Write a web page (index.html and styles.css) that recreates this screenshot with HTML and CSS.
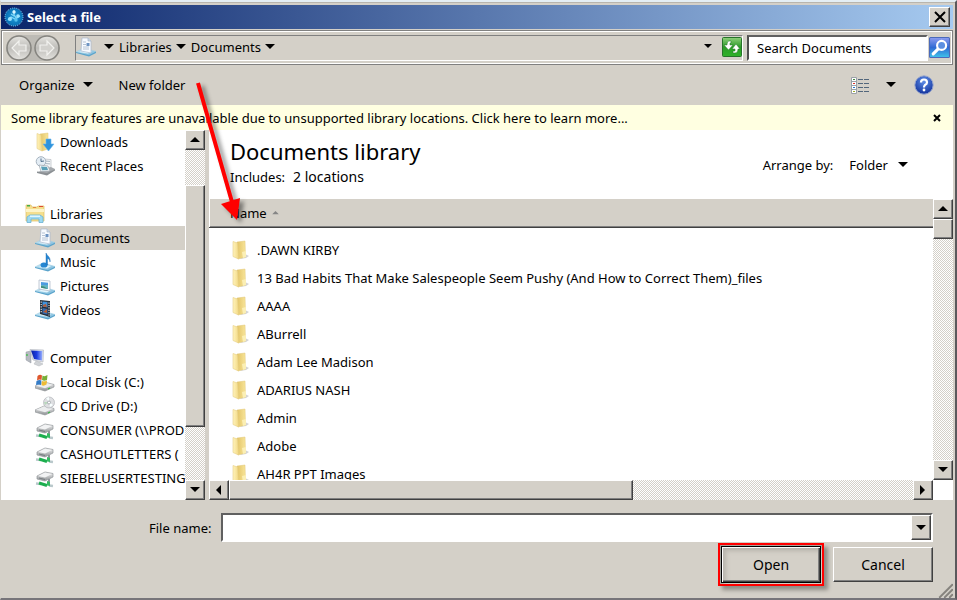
FILE: index.html
```html
<!DOCTYPE html>
<html lang="en">
<head>
<meta charset="utf-8">
<meta name="viewport" content="width=device-width, initial-scale=1">
<title>Select a file</title>
<link rel="stylesheet" href="styles.css">
</head>
<body>
<svg class="defs" aria-hidden="true">
  <defs>
    <linearGradient id="gold" x1="0" x2="1"><stop offset="0" stop-color="#e3c466"/><stop offset="1" stop-color="#f8e59a"/></linearGradient>
    <linearGradient id="goldFront" x1="0" x2="1"><stop offset="0" stop-color="#fff3bd"/><stop offset="1" stop-color="#f3da85"/></linearGradient>
    <linearGradient id="tray" x1="0" y1="0" x2="1" y2="1"><stop offset="0" stop-color="#d6f0fa"/><stop offset="1" stop-color="#6fb3d8"/></linearGradient>
    <linearGradient id="metal" x1="0" y1="0" x2="0" y2="1"><stop offset="0" stop-color="#f4f4f4"/><stop offset="1" stop-color="#8d9194"/></linearGradient>
    <linearGradient id="green" x1="0" y1="0" x2="0" y2="1"><stop offset="0" stop-color="#8fd07c"/><stop offset=".5" stop-color="#2c9b28"/><stop offset="1" stop-color="#2fb32a"/></linearGradient>
    <linearGradient id="searchBlue" x1="0" y1="0" x2="0" y2="1"><stop offset="0" stop-color="#8e9cf0"/><stop offset=".5" stop-color="#2f6ad4"/><stop offset="1" stop-color="#3fc4ea"/></linearGradient>
    <linearGradient id="navFace" x1="0" y1="0" x2="0" y2="1"><stop offset="0" stop-color="#e6e5e1"/><stop offset=".5" stop-color="#bdbcb8"/><stop offset="1" stop-color="#e4e3df"/></linearGradient>
    <radialGradient id="helpBlue" cx=".5" cy=".3" r=".7"><stop offset="0" stop-color="#5f8fe8"/><stop offset="1" stop-color="#12329c"/></radialGradient>
    <radialGradient id="appBlue" cx=".5" cy=".5" r=".6"><stop offset="0" stop-color="#1f9ad8"/><stop offset="1" stop-color="#0468ae"/></radialGradient>
    <linearGradient id="screen" x1="0" y1="0" x2="1" y2="0"><stop offset="0" stop-color="#0a1fa0"/><stop offset=".5" stop-color="#1c3be0"/><stop offset="1" stop-color="#9db4ff"/></linearGradient>
  </defs>
  <symbol id="folder" viewBox="0 0 20 20">
    <path d="M9 19l5-5 4 2-3 2z" fill="#b5b5b5" opacity=".6"/>
    <path d="M6 2l8-1 .5 16L7 19z" fill="url(#gold)" stroke="#e0c677" stroke-width=".5"/>
    <path d="M11 12l4-1v6l-3 1z" fill="#fbefb5"/>
    <path d="M2 1.500L6.500 3 7.500 19 2 16.500z" fill="url(#goldFront)" stroke="#e6cf85" stroke-width=".6"/>
  </symbol>
  <symbol id="downloads" viewBox="0 0 20 20">
    <path d="M5 2l8-1v16l-6 2z" fill="url(#gold)" stroke="#e0c677" stroke-width=".5"/>
    <path d="M2 1.500L6 3l1 16-5-2.500z" fill="url(#goldFront)" stroke="#e6cf85" stroke-width=".6"/>
    <path d="M11 7h5v5h3l-5.500 7L8 12h3z" fill="#2f93dc" stroke="#69b7ec" stroke-width=".6"/>
  </symbol>
  <symbol id="tray-base" viewBox="0 0 20 20">
    <path d="M0 15l8-4 12 3.500-7 4z" fill="url(#tray)" stroke="#a3cfe3" stroke-width=".6"/>
    <path d="M0 15l13 3 7-3.500V16l-7 3.500L0 16z" fill="#5ba4cc"/>
    <path d="M4 15l4.500-2.500L16 14l-4 2.500z" fill="#e4f6fd"/>
  </symbol>
  <symbol id="documents" viewBox="0 0 20 20">
    <use href="#tray-base"/>
    <path d="M6 1h6l3 3v12l-10-2z" fill="#f7faff" stroke="#a9b7cb" stroke-width=".7"/>
    <path d="M12 1v3h3" fill="#cfdcec" stroke="#9eabbe" stroke-width=".6"/>
    <path d="M7 5h3M7 7.500h3M7 10h6M7 12h6" stroke="#a5b4c8" stroke-width=".8"/>
    <path d="M10.500 6h3v3h-3z" fill="#6c93c2"/>
  </symbol>
  <symbol id="music" viewBox="0 0 20 20">
    <use href="#tray-base"/>
    <ellipse cx="9" cy="13" rx="3.500" ry="2.600" fill="#2687d2"/>
    <path d="M11 13V1c1 3 5 4 4 9 0-2-1-3-2.500-3.500V13z" fill="#2485d4" stroke="#1869ad" stroke-width=".4"/>
  </symbol>
  <symbol id="pictures" viewBox="0 0 20 20">
    <use href="#tray-base"/>
    <path d="M4 4l11 1v10L4 13z" fill="#f8fbfe" stroke="#a9b6c4" stroke-width=".7"/>
    <path d="M6 6l7 .7V9L6 9z" fill="#4c9be0"/>
    <path d="M6 9h7v4l-7-1.200z" fill="#62b3c4"/><path d="M6 10l3 .5 4 2.500-7-1.200z" fill="#3e8c78"/>
  </symbol>
  <symbol id="videos" viewBox="0 0 20 20">
    <use href="#tray-base"/>
    <path d="M5 0l10 1v16L5 14z" fill="#26303c"/>
    <path d="M7.500 1.500l5 .5v5.500l-5-1z" fill="#4192dc"/>
    <path d="M7.500 8l5 1v5.500l-5-1z" fill="#346bb1"/>
    <path d="M8 5l3-1 1 3-4-.6zM8 12l4-3v4z" fill="#b85b31"/>
    <path d="M6.200 1.500v12M14 2.500v13" stroke="#dfe6ec" stroke-width="1.100" stroke-dasharray="1.200 1.200"/>
  </symbol>
  <symbol id="recent" viewBox="0 0 20 20">
    <path d="M8 3l8 .5v8L8 11z" fill="#f5f7f9" stroke="#b7bcc2" stroke-width=".7"/>
    <path d="M10 5l5 .4M10 7.500l5 .4" stroke="#a9b6c2"/>
    <circle cx="6" cy="5.500" r="4.800" fill="#e4edf5" stroke="#a7b4c0"/>
    <path d="M6 2.500v3l3-.5" fill="none" stroke="#53718d"/>
    <path d="M3 16l13-5 4 2-8 6z" fill="#a5a9ad"/>
    <path d="M4 9l9 1 2 5-9 .5z" fill="#f4f7f9" stroke="#9ca5ad" stroke-width=".7"/>
    <path d="M6 10.500l6 .5 1 3-6 .2z" fill="#5aa0b8"/>
    <path d="M2 15.500l10 1.500 8-4v1.500L12 19.500 2 17z" fill="#8b9094"/>
  </symbol>
  <symbol id="libraries" viewBox="0 0 20 20">
    <path d="M1 3V1h5l1 2h5l1-1h6v15H1z" fill="#f5df8e" stroke="#dcbd62" stroke-width=".7"/>
    <path d="M1 5h18v3H1z" fill="#fdf4c7"/>
    <path d="M2 1h3v1.500H2z" fill="#43ad49"/><path d="M8 3h3v1H8z" fill="#e38b41"/><path d="M14 2h4v1h-4z" fill="#df4a33"/>
    <path d="M2 18.500V13l3-2h10l3 2v5.500h-4V15H6v3.500z" fill="#9ddaf2" stroke="#6bb2d4" stroke-width=".8"/>
    <path d="M5 11.500h10V13H5z" fill="#dff6ff"/>
  </symbol>
  <symbol id="computer" viewBox="0 0 20 20">
    <path d="M1 4l5-1v12l-5-3z" fill="#b5bac0" stroke="#9297a0" stroke-width=".5"/>
    <path d="M5 1.500L18.500 2 18 14 8 12z" fill="#e3e5e9" stroke="#b4b9c2" stroke-width=".7"/>
    <path d="M6 2.500l11.500.5-.5 9.500-8-1.500z" fill="url(#screen)"/>
    <path d="M11 13l3 1 4 2-4 2-5-2z" fill="#d0d3d7" stroke="#b0b4b8" stroke-width=".5"/>
    <path d="M2 6v2" stroke="#35bd3b" stroke-width="1.200"/>
  </symbol>
  <symbol id="drive" viewBox="0 0 20 20">
    <path d="M0 14l9-4 10 2.500V15l-9 4-10-3z" fill="url(#metal)" stroke="#94989b" stroke-width=".7"/>
    <path d="M1 13.800l8-3.300 9 2.200-8 3.500z" fill="#eceeef"/>
    <path d="M13 17l2-1" stroke="#36bb42" stroke-width="1.200"/>
  </symbol>
  <symbol id="local-disk" viewBox="0 0 20 20">
    <use href="#drive"/>
    <path d="M2.500 4q2.500-2 4.500-.5L6.500 8q-2-1-4.500.5z" fill="#df572d"/><path d="M7.500 3.500q2 1.500 5-.5l-.5 5q-3 1.500-5 0z" fill="#77af38"/>
    <path d="M1.500 9q3-1.500 5-.5L6 13q-2-1-5 0z" fill="#347cc7"/><path d="M7 9q2 1 5-.5l-.5 4q-3 2-5 .5z" fill="#eebc35"/>
  </symbol>
  <symbol id="cd-drive" viewBox="0 0 20 20">
    <use href="#drive"/>
    <circle cx="14" cy="6.500" r="5.500" fill="#dedfe2" stroke="#b1b5b9" stroke-width=".7"/>
    <path d="M14 6l-3-4 3-1zM14 6l4 3-3 2z" fill="#f8ffff"/>
    <path d="M14 6l-4 3-1-3z" fill="#b9d7bd"/>
    <circle cx="14" cy="6.500" r="1.500" fill="#fff" stroke="#8d9499" stroke-width=".7"/>
  </symbol>
  <symbol id="network-drive" viewBox="0 0 20 20">
    <path d="M2 8l8-4 8 1.500V9l-8 4-8-2z" fill="url(#metal)" stroke="#94989b" stroke-width=".7"/>
    <path d="M3 8l7-3.200L17 6l-7 3.500z" fill="#f2f3f4"/>
    <path d="M4 10l6 1.500" stroke="#777d81"/>
    <path d="M14 11v4" stroke="#8d9498" stroke-width="2"/>
    <path d="M1 15.500l5 .5m8 1.500l4 .5" stroke="#b9c8cb" stroke-width="2.500"/>
    <path d="M4 15l8 2.500" stroke="#1cae4e" stroke-width="3"/>
    <path d="M12 13l3 1v4l-3-.5z" fill="#35bb62"/>
  </symbol>
  <symbol id="down" viewBox="0 0 10 6"><path d="M0 0h10L5 5z"/></symbol>
  <symbol id="up" viewBox="0 0 10 6"><path d="M0 5h10L5 0z"/></symbol>
  <symbol id="left" viewBox="0 0 6 10"><path d="M5 0v10L0 5z"/></symbol>
  <symbol id="right" viewBox="0 0 6 10"><path d="M0 0v10l5-5z"/></symbol>
</svg>

<main class="dialog">
  <header class="titlebar">
    <svg class="app-icon" viewBox="0 0 20 20" aria-hidden="true">
      <circle cx="10" cy="10" r="9" fill="url(#appBlue)" stroke="#8bd8ff" stroke-dasharray="1 1"/>
      <path d="M4 13l3-3 4 2 5-3M10 3v5l3 4M7 7l3 2" fill="none" stroke="#7ed5f6" stroke-width="1.300"/>
      <circle cx="10" cy="5" r="1.700" fill="#d9f6ff"/><circle cx="6" cy="12" r="2" fill="#9be3ff"/><circle cx="14" cy="9" r="1.800" fill="#9be3ff"/><circle cx="12" cy="13" r="1.700" fill="#54c2ef"/>
    </svg>
    <h1 class="title">Select a file</h1>
    <button class="face close" type="button" aria-label="Close"><svg viewBox="0 0 12 12"><path d="M1 1l10 10M11 1L1 11" stroke="#000" stroke-width="2"/></svg></button>
  </header>

  <nav class="navbar" aria-label="Address">
    <div class="history">
      <button class="plain round" type="button" aria-label="Back"><svg viewBox="0 0 26 26"><circle cx="13" cy="13" r="12" fill="url(#navFace)" stroke="#85847f" stroke-width="1.500"/><path d="M13 6l-7 7 7 7v-4h7v-6h-7z" fill="#d2d1cd" stroke="#f2f2ef" stroke-width="1.200"/></svg></button>
      <button class="plain round" type="button" aria-label="Forward"><svg viewBox="0 0 26 26"><circle cx="13" cy="13" r="12" fill="url(#navFace)" stroke="#85847f" stroke-width="1.500"/><path d="M13 6l7 7-7 7v-4H6v-6h7z" fill="#d2d1cd" stroke="#f2f2ef" stroke-width="1.200"/></svg></button>
    </div>
    <div class="address">
      <svg class="icon" aria-hidden="true"><use href="#documents"/></svg>
      <button class="plain crumb" type="button" aria-label="Locations"><svg class="caret"><use href="#down"/></svg></button>
      <button class="plain crumb" type="button">Libraries <svg class="caret"><use href="#down"/></svg></button>
      <button class="plain crumb" type="button">Documents <svg class="caret"><use href="#down"/></svg></button>
      <button class="plain crumb previous" type="button" aria-label="Previous locations"><svg class="caret small" viewBox="0 0 10 6"><use href="#down"/></svg></button>
      <button class="plain refresh" type="button" aria-label="Refresh"><svg class="icon" viewBox="0 0 20 20"><rect x=".5" y=".5" width="19" height="19" rx="1" fill="url(#green)" stroke="#27732a"/><path d="M9 4H7q-2 0-2 4H2l4.500 5L11 8H8V6h1zM11 16h2q3 0 3-4h2l-4-5-4 5h3v2h-2z" fill="#fff" stroke="#227a25" stroke-width=".5"/></svg></button>
    </div>
    <div class="search">
      <input class="search-input" type="text" value="Search Documents" aria-label="Search Documents">
      <button class="plain" type="button" aria-label="Search"><svg class="search-icon" viewBox="0 0 20 20"><rect x=".5" y=".5" width="19" height="19" rx="1" fill="url(#searchBlue)" stroke="#4b6aba"/><path d="M9 11l-5 5" stroke="#fff" stroke-width="3" stroke-linecap="round"/><circle cx="12" cy="8" r="4.300" fill="#5c8fe0" stroke="#fff" stroke-width="2"/></svg></button>
    </div>
  </nav>

  <div class="toolbar">
    <button class="plain organize" type="button">Organize <svg class="caret"><use href="#down"/></svg></button>
    <button class="plain" type="button">New folder</button>
    <button class="plain view" type="button" aria-label="Change your view"><svg class="icon" viewBox="0 0 20 20"><path d="M1.500 2.500h5v16h-5z" fill="#fff" stroke="#9aa1a8"/><path d="M1 6.500h6M1 10.500h6M1 14.500h6" stroke="#9aa1a8"/><path d="M3 4.500h2" stroke="#408843"/><path d="M3 8.500h2" stroke="#e03428"/><path d="M3 12.500h2" stroke="#2871ca"/><path d="M3 16.500h2" stroke="#9fad28"/><path d="M8 4.500h5m1 0h5M8 8.500h5m1 0h5M8 12.500h5m1 0h5M8 16.500h5m1 0h5" stroke="#53677c"/></svg></button>
    <button class="plain" type="button" aria-label="More views"><svg class="caret"><use href="#down"/></svg></button>
    <button class="plain help" type="button" aria-label="Help"><svg class="icon" viewBox="0 0 20 20"><circle cx="10" cy="10" r="9.200" fill="url(#helpBlue)" stroke="#9ba9ce"/><path d="M7 7.500q0-3 3-3t3 3q0 1.500-2 2.500-1 1-1 2.500" fill="none" stroke="#fff" stroke-width="2.200"/><circle cx="10" cy="15" r="1.400" fill="#fff"/></svg></button>
  </div>

  <div class="notice">
    <a class="notice-text" href="#learn-more">Some library features are unavailable due to unsupported library locations. Click here to learn more...</a>
    <button class="plain" type="button" aria-label="Dismiss"><svg class="dismiss" viewBox="0 0 8 8"><path d="M1 1l6 6M7 1L1 7" stroke="#000" stroke-width="2"/></svg></button>
  </div>

  <div class="browser">
    <aside class="sidebar">
      <div class="tree">
        <ul class="group">
          <li class="place"><svg class="icon"><use href="#downloads"/></svg>Downloads</li>
          <li class="place"><svg class="icon"><use href="#recent"/></svg>Recent Places</li>
        </ul>
        <ul class="group">
          <li class="place root"><svg class="icon"><use href="#libraries"/></svg>Libraries</li>
          <li class="place selected"><svg class="icon"><use href="#documents"/></svg>Documents</li>
          <li class="place"><svg class="icon"><use href="#music"/></svg>Music</li>
          <li class="place"><svg class="icon"><use href="#pictures"/></svg>Pictures</li>
          <li class="place"><svg class="icon"><use href="#videos"/></svg>Videos</li>
        </ul>
        <ul class="group">
          <li class="place root"><svg class="icon"><use href="#computer"/></svg>Computer</li>
          <li class="place"><svg class="icon"><use href="#local-disk"/></svg>Local Disk (C:)</li>
          <li class="place"><svg class="icon"><use href="#cd-drive"/></svg>CD Drive (D:)</li>
          <li class="place"><svg class="icon"><use href="#network-drive"/></svg>CONSUMER (\\PROD</li>
          <li class="place"><svg class="icon"><use href="#network-drive"/></svg>CASHOUTLETTERS (</li>
          <li class="place"><svg class="icon"><use href="#network-drive"/></svg>SIEBELUSERTESTING</li>
        </ul>
      </div>
      <div class="scroll vertical">
        <button class="face step" type="button" aria-label="Scroll up"><svg class="caret"><use href="#up"/></svg></button>
        <div class="track tree-track"><div class="face thumb"></div></div>
        <button class="face step" type="button" aria-label="Scroll down"><svg class="caret"><use href="#down"/></svg></button>
      </div>
    </aside>

    <section class="content">
      <div class="library-head">
        <div>
          <h2 class="library-title">Documents library</h2>
          <p class="includes">Includes: <a class="locations" href="#locations">2 locations</a></p>
        </div>
        <div class="arrange"><span id="arrange-label">Arrange by:</span>
          <button class="plain" type="button" aria-labelledby="arrange-label arrange-value"><span id="arrange-value">Folder</span> <svg class="caret"><use href="#down"/></svg></button>
        </div>
      </div>
      <div class="listing">
        <div class="files">
          <table class="file-table">
            <thead><tr><th scope="col">Name <svg class="sort" viewBox="0 0 10 6"><use href="#up"/></svg></th></tr></thead>
            <tbody>
              <tr><td><svg class="icon"><use href="#folder"/></svg>.DAWN KIRBY</td></tr>
              <tr><td><svg class="icon"><use href="#folder"/></svg>13 Bad Habits That Make Salespeople Seem Pushy (And How to Correct Them)_files</td></tr>
              <tr><td><svg class="icon"><use href="#folder"/></svg>AAAA</td></tr>
              <tr><td><svg class="icon"><use href="#folder"/></svg>ABurrell</td></tr>
              <tr><td><svg class="icon"><use href="#folder"/></svg>Adam Lee Madison</td></tr>
              <tr><td><svg class="icon"><use href="#folder"/></svg>ADARIUS NASH</td></tr>
              <tr><td><svg class="icon"><use href="#folder"/></svg>Admin</td></tr>
              <tr><td><svg class="icon"><use href="#folder"/></svg>Adobe</td></tr>
              <tr><td><svg class="icon"><use href="#folder"/></svg>AH4R PPT Images</td></tr>
            </tbody>
          </table>
        </div>
        <div class="scroll vertical">
          <button class="face step" type="button" aria-label="Scroll up"><svg class="caret"><use href="#up"/></svg></button>
          <div class="track"><div class="face thumb short"></div></div>
          <button class="face step" type="button" aria-label="Scroll down"><svg class="caret"><use href="#down"/></svg></button>
        </div>
        <div class="scroll horizontal">
          <button class="face step" type="button" aria-label="Scroll left"><svg class="side"><use href="#left"/></svg></button>
          <div class="track"><div class="face thumb wide"></div></div>
          <button class="face step" type="button" aria-label="Scroll right"><svg class="side"><use href="#right"/></svg></button>
        </div>
      </div>
    </section>
  </div>

  <form class="footer">
    <div class="name-row">
      <label for="file-name">File name:</label>
      <div class="combo">
        <input id="file-name" class="name-input" type="text">
        <button class="face step" type="button" aria-label="Recent file names"><svg class="caret"><use href="#down"/></svg></button>
      </div>
    </div>
    <div class="actions">
      <div class="highlight"><button class="face action default" type="button">Open</button></div>
      <button class="face action" type="button">Cancel</button>
    </div>
    <svg class="grip" viewBox="0 0 16 16" aria-hidden="true"><path d="M1 16L16 1M6 16L16 6M11 16l5-5" stroke="#fff"/><path d="M2 16L16 2M7 16l9-9M12 16l4-4" stroke="#85827c" stroke-width="2"/></svg>
  </form>

  <svg class="pointer" viewBox="0 0 60 150" aria-hidden="true">
    <path d="M8 3L42 122" stroke="#f00" stroke-width="4"/>
    <path d="M31 124l19-6-3 22z" fill="#f00"/>
  </svg>
</main>
</body>
</html>
```

FILE: styles.css
```css
:root {
  --face: #d4d0c8;
  --shadow: #808080;
  --dark: #404040;
}

* { box-sizing: border-box; }

body {
  margin: 0;
  background: var(--face);
  color: #000;
  font: 13px/20px "Noto Sans", sans-serif;
}

button, input { font: inherit; color: inherit; }
h1, h2, p, ul { margin: 0; padding: 0; font-weight: normal; }
ul { list-style: none; }
a { color: inherit; text-decoration: none; }
svg { display: block; flex: none; }

.defs { position: absolute; width: 0; height: 0; }
.icon { width: 20px; height: 20px; }
.caret { width: 10px; height: 6px; }
.caret.small { width: 8px; height: 5px; }
.side { width: 6px; height: 10px; }

.plain {
  display: flex;
  align-items: center;
  padding: 0;
  border: 0;
  background: none;
}

.face {
  background: var(--face);
  border: 1px solid;
  border-color: #fff var(--dark) var(--dark) #fff;
  box-shadow: inset -1px -1px var(--shadow);
}

.dialog {
  position: relative;
  display: flex;
  flex-direction: column;
  height: 100vh;
  min-height: 480px;
  padding: 3px 2px 0 0;
  border-top: 2px solid #e4eef4;
  border-left: 1px solid var(--face);
  border-right: 2px solid #5a595c;
  border-bottom: 2px solid #77757a;
  box-shadow: inset 0 1px #b8b5ae;
}

.titlebar {
  display: flex;
  align-items: center;
  gap: 3px;
  height: 24px;
  padding: 0 3px;
  background: linear-gradient(90deg, #0a246a, #a6caf0);
}
.app-icon { width: 20px; height: 20px; }
.title {
  flex: 1;
  color: #fff;
  font: bold 13px/20px "Noto Sans", sans-serif;
}
.close {
  display: grid;
  place-items: center;
  width: 21px;
  height: 20px;
  padding: 0;
}
.close svg { width: 12px; height: 12px; }

.navbar {
  display: flex;
  align-items: center;
  height: 35px;
  margin-top: 1px;
  padding: 0 2px 0 4px;
  border: 1px solid var(--shadow);
  box-shadow: inset 1px 1px #fff, inset -1px -1px #fff;
}
.history {
  display: flex;
  gap: 2px;
  background: #bdbbb5;
  border-radius: 13px;
}
.round svg { width: 26px; height: 26px; }
.address {
  display: flex;
  flex: 1;
  align-items: center;
  height: 26px;
  margin: 0 4px 0 15px;
  padding-bottom: 2px;
  border: 1px solid;
  border-color: var(--shadow) #fff #fff var(--shadow);
}
.crumb { gap: 4px; margin-left: 5px; }
.address .icon + .crumb { margin-left: 8px; }
.previous { margin-left: auto; }
.refresh { margin-left: 10px; }
.search {
  display: flex;
  align-items: center;
  gap: 1px;
  width: 203px;
}
.search-input {
  flex: 1;
  min-width: 0;
  height: 26px;
  padding: 0 8px;
  border: 2px solid;
  border-color: #606060 #fff #fff #505050;
  background: #fff;
}
.search-icon { width: 21px; height: 21px; }

.toolbar {
  display: flex;
  align-items: center;
  height: 40px;
  padding: 0 19px 0 18px;
}
.organize { gap: 8px; margin-right: 26px; }
.view { margin-left: auto; margin-right: 16px; }
.help { margin-left: 18px; }

.notice {
  display: flex;
  align-items: center;
  justify-content: space-between;
  height: 25px;
  padding: 0 12px 0 10px;
  background: #ffffe1;
}
.dismiss { width: 8px; height: 8px; }

.browser {
  display: flex;
  flex: 1;
  gap: 4px;
  min-height: 0;
}
.sidebar {
  display: flex;
  width: 204px;
  background: #fff;
}
.tree { flex: 1; overflow: hidden; white-space: nowrap; }
.group { margin-bottom: 24px; }
.place {
  display: flex;
  align-items: center;
  gap: 5px;
  height: 24px;
  padding-left: 34px;
}
.place.root { padding-left: 24px; }
.place.selected { background: var(--face); }

.scroll {
  display: flex;
  background: repeating-conic-gradient(#fff 0 25%, var(--face) 0 50%) 0 0 / 2px 2px;
}
.vertical { flex-direction: column; width: 20px; }
.horizontal { height: 20px; }
.track { display: flex; flex: 1; flex-direction: inherit; min-height: 0; }
.step {
  display: grid;
  flex: none;
  place-items: center;
  width: 20px;
  height: 20px;
  padding: 0;
}
.thumb { height: 82%; }
.tree-track { padding-top: 35px; }
.thumb.short { height: 20px; }
.scroll .thumb.wide { width: 59%; height: 20px; }

.content {
  display: flex;
  flex: 1;
  flex-direction: column;
  min-width: 0;
  background: #fff;
}
.library-head {
  display: flex;
  justify-content: space-between;
  height: 69px;
  padding: 7px 45px 0 21px;
}
.library-title { font: 22px/28px "Noto Sans", sans-serif; }
.includes { display: flex; gap: 8px; line-height: 24px; }
.locations { font-size: 14px; }
.arrange { display: flex; gap: 16px; height: 56px; align-items: center; }
.arrange .plain { gap: 10px; }
.listing {
  display: grid;
  flex: 1;
  grid-template: minmax(0, 1fr) 20px / minmax(0, 1fr) 20px;
  min-height: 0;
}
.files { overflow: hidden; }
.file-table { width: 100%; border-collapse: separate; border-spacing: 0; }
.file-table th {
  height: 29px;
  padding: 0 21px;
  background: var(--face);
  border-bottom: 1px solid var(--dark);
  box-shadow: inset 1px 0 #fff, inset 0 -1px var(--shadow);
  font-weight: normal;
  text-align: left;
}
.sort { display: inline-block; width: 7px; height: 4px; margin-left: 2px; vertical-align: 3px; fill: #858585; }
.file-table tbody::before { content: ""; display: block; height: 8px; }
.file-table td { height: 28px; padding: 0 22px; white-space: nowrap; }
.file-table .icon { display: inline-block; margin-right: 6px; vertical-align: -5px; }

.footer {
  position: relative;
  padding: 13px 20px 12px 148px;
}
.name-row { display: flex; align-items: center; gap: 10px; }
.combo {
  display: flex;
  flex: 1;
  align-items: center;
  height: 29px;
  border: 2px solid;
  border-color: #606060 #fff #fff #606060;
  background: #fff;
}
.name-input { flex: 1; min-width: 0; border: 0; outline: 0; background: none; }
.combo .step { height: 25px; }
.actions {
  display: flex;
  justify-content: flex-end;
  align-items: center;
  gap: 9px;
  margin-top: 1px;
  font: 14px/20px "Noto Sans", sans-serif;
}
.highlight {
  padding: 1px;
  border: 2px solid #f00;
  box-shadow: 4px 4px 4px #8f8c86, inset 3px 3px 4px #a19e97;
}
.action { width: 100px; height: 35px; padding: 0; }
.action.default {
  height: 37px;
  border: 1px solid #000;
  box-shadow: inset 1px 1px #fff, inset -1px -1px var(--dark), inset -2px -2px var(--shadow), inset 4px 4px 4px #b8b4ad;
}
.grip { position: absolute; right: 0; bottom: 0; width: 16px; height: 16px; }

.pointer {
  position: absolute;
  top: 78px;
  left: 189px;
  width: 60px;
  height: 150px;
  pointer-events: none;
  filter: drop-shadow(4px 3px 2px #00000070);
}
```
